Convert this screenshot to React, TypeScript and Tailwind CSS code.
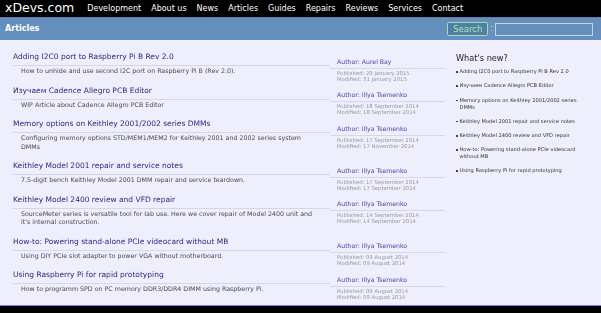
import React from "react";

const nav = ["Development", "About us", "News", "Articles", "Guides", "Repairs", "Reviews", "Services", "Contact"];

const articles = [
  {
    title: "Adding I2C0 port to Raspberry Pi B Rev 2.0",
    author: "Aurel Bay",
    desc: "How to unhide and use second I2C port on Raspberry Pi B (Rev 2.0).",
    published: "29 January 2015",
    modified: "31 January 2015",
  },
  {
    title: "Изучаем Cadence Allegro PCB Editor",
    author: "Illya Tsemenko",
    desc: "WIP Article about Cadence Allegro PCB Editor",
    published: "18 September 2014",
    modified: "18 September 2014",
  },
  {
    title: "Memory options on Keithley 2001/2002 series DMMs",
    author: "Illya Tsemenko",
    desc: "Configuring memory options STD/MEM1/MEM2 for Keithley 2001 and 2002 series system DMMs",
    published: "17 September 2014",
    modified: "17 November 2014",
  },
  {
    title: "Keithley Model 2001 repair and service notes",
    author: "Illya Tsemenko",
    desc: "7.5-digit bench Keithley Model 2001 DMM repair and service teardown.",
    published: "17 September 2014",
    modified: "17 September 2014",
  },
  {
    title: "Keithley Model 2400 review and VFD repair",
    author: "Illya Tsemenko",
    desc: "SourceMeter series is versatile tool for lab use. Here we cover repair of Model 2400 unit and it's internal construction.",
    published: "14 September 2014",
    modified: "14 September 2014",
  },
  {
    title: "How-to: Powering stand-alone PCIe videocard without MB",
    author: "Illya Tsemenko",
    desc: "Using DIY PCIe slot adapter to power VGA without motherboard.",
    published: "09 August 2014",
    modified: "09 August 2014",
  },
  {
    title: "Using Raspberry Pi for rapid prototyping",
    author: "Illya Tsemenko",
    desc: "How to programm SPD on PC memory DDR3/DDR4 DIMM using Raspberry Pi.",
    published: "09 August 2014",
    modified: "09 August 2014",
  },
];

export default function App() {
  return (
    <div className="w-[601px] h-[313px] overflow-hidden bg-black font-['DejaVu_Sans',Verdana,sans-serif]">
      {/* top bar */}
      <div className="h-[17px] bg-black flex items-center text-white">
        <div className="pl-[5px] text-[12.5px] leading-none">xDevs.com</div>
        <div className="ml-[13px] flex gap-[10px] text-[8px] leading-none">
          {nav.map((n) => (
            <span key={n}>{n}</span>
          ))}
        </div>
      </div>

      {/* section header */}
      <div className="h-[23px] bg-[#6590be] border-t border-[#5a84b0] flex items-center justify-between pl-[5px] pr-[8px]">
        <div className="text-white font-bold text-[8px]">Articles</div>
        <div className="flex items-center">
          <button className="h-[14px] px-[5px] rounded-[2px] border border-[#a3dcae] bg-[#4f7fa3] text-[#a8e6b4] text-[8.5px] leading-none">
            Search
          </button>
          <span className="mx-[2px] text-[#c8dcec] text-[8px]">:</span>
          <div className="w-[98px] h-[13px] border border-[#c6d6e6] bg-[#6590be]" />
        </div>
      </div>

      {/* content */}
      <div className="bg-[#eeeefd] flex pt-[12px] pb-[1px] border-b-[1.5px] border-[#7d7dd8]">
        <div className="ml-[13px] w-[432px] will-change-transform">
          {articles.map((a) => (
            <div key={a.title} className="flex items-start pb-[4px]">
              <div className="w-[317px]">
                <div className="text-[7.5px] leading-[10px] pb-[3px] border-b border-[#d6d6e8] text-[#2a2a78]">
                  {a.title}
                </div>
                <div className="pl-[8px] pr-[12px] pt-[1px] mb-[6px] text-[6.3px] leading-[8.5px] text-[#4a4a4a]">
                  {a.desc}
                </div>
              </div>
              <div className="w-[115px] pt-[4.5px]">
                <div className="pl-[7px] text-[6.2px] leading-[9px] pb-[2px] border-b border-[#d6d6e8] text-[#4a4a9e]">
                  Author: {a.author}
                </div>
                <div className="pl-[7px] pt-[1px] text-[5.3px] leading-[6px] text-[#9a9a9a]">
                  <div>Published: {a.published}</div>
                  <div>Modified: {a.modified}</div>
                </div>
              </div>
            </div>
          ))}
        </div>

        <div className="ml-[11px] w-[126px] pt-[1.3px] will-change-transform">
          <div className="text-[8.2px] leading-[11px] text-[#222]">What's new?</div>
          <ul className="mt-[4px]">
            {articles.map((a) => (
              <li key={a.title} className="flex items-start mb-[7.2px] text-[5.1px] leading-[7px] text-[#333]">
                <span className="mt-[3px] mr-[2px] w-[1.5px] h-[1.5px] bg-[#444] shrink-0" />
                <span>{a.title}</span>
              </li>
            ))}
          </ul>
        </div>
      </div>
    </div>
  );
}
